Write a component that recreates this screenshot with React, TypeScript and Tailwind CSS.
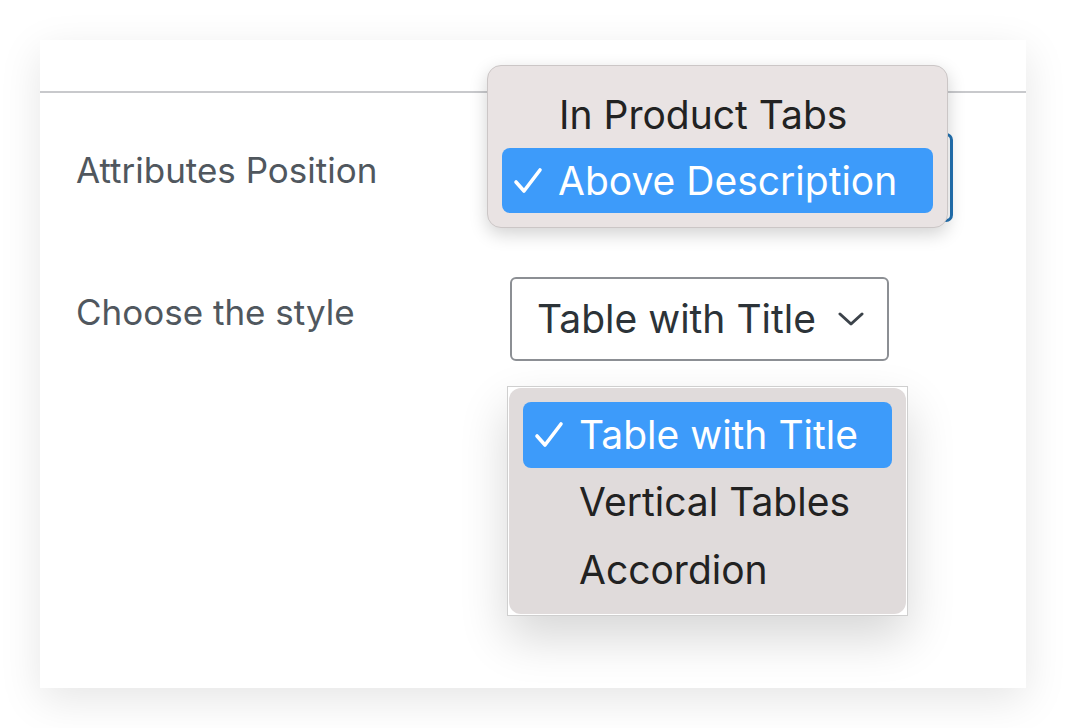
import React from "react";

const font = { fontFamily: "Inter, 'Noto Sans', sans-serif" };

function Chevron() {
  return (
    <svg width="26" height="16" viewBox="0 0 26 16" fill="none" className="ml-[22px]">
      <polyline points="2,3 13,13 24,3" stroke="#3c434a" strokeWidth="3" strokeLinecap="round" strokeLinejoin="round" />
    </svg>
  );
}

function Check() {
  return (
    <svg width="30" height="30" viewBox="0 0 30 30" fill="none" className="mr-[15px]">
      <polyline points="3,16 11,25 27,4" stroke="white" strokeWidth="3.6" strokeLinecap="round" strokeLinejoin="round" />
    </svg>
  );
}

export default function App() {
  return (
    <div className="w-[1066px] h-[728px] bg-white p-[40px]" style={font}>
      <div className="relative w-[986px] h-[648px] bg-white shadow-[0_12px_40px_rgba(0,0,0,0.10)]">
        <div className="h-[53px] border-b-2 border-[#c8c9cc]" />
        <div className="flex flex-col pl-[36px]">
          <div className="flex items-start">
            <div className="w-[434px] mt-[57px] h-[40px] flex items-center">
              <span className="text-[35px] leading-[40px] text-[#50575e]">Attributes Position</span>
            </div>
            <div className="mt-[40px] w-[443px] h-[89px] rounded-[7px] border-[3px] border-[#2271b1] bg-white" />
          </div>
          <div className="flex items-start mt-[55px]">
            <div className="w-[434px] mt-[15px] h-[40px] flex items-center">
              <span className="text-[35px] leading-[40px] text-[#50575e]">Choose the style</span>
            </div>
            <div className="w-[379px] h-[84px] rounded-[6px] border-2 border-[#8c8f94] bg-white flex items-center pl-[25px]">
              <span className="text-[39px] leading-[44px] text-[#2c3338]">Table with Title</span>
              <Chevron />
            </div>
          </div>
        </div>

        {/* popup 1 */}
        <div className="absolute left-[447px] top-[25px] w-[461px] h-[163px] rounded-[14px] bg-[#e9e3e3] border border-[#cbc6c6] shadow-[0_6px_18px_rgba(0,0,0,0.18)] px-[14px] pt-[16px]">
          <div className="h-[66px] flex items-center pl-[57px]">
            <span className="text-[39px] leading-[44px] text-[#222222]">In Product Tabs</span>
          </div>
          <div className="h-[65px] rounded-[8px] bg-[#3d9bfa] flex items-center pl-[11px]">
            <Check />
            <span className="text-[39px] leading-[44px] text-white">Above Description</span>
          </div>
        </div>

        {/* popup 2 */}
        <div className="absolute left-[467px] top-[346px] w-[401px] h-[230px] bg-white border border-[#cfcfcf] shadow-[0_22px_45px_rgba(0,0,0,0.16)] p-[1px]">
          <div className="w-full h-full rounded-[12px] bg-[#e0dbdb] px-[14px] pt-[14px]">
            <div className="h-[66px] rounded-[8px] bg-[#3d9bfa] flex items-center pl-[11px]">
              <Check />
              <span className="text-[39px] leading-[44px] text-white">Table with Title</span>
            </div>
            <div className="h-[68px] flex items-center pl-[56px]">
              <span className="text-[39px] leading-[44px] text-[#222222]">Vertical Tables</span>
            </div>
            <div className="h-[67px] flex items-center pl-[56px]">
              <span className="text-[39px] leading-[44px] text-[#222222]">Accordion</span>
            </div>
          </div>
        </div>
      </div>
    </div>
  );
}
